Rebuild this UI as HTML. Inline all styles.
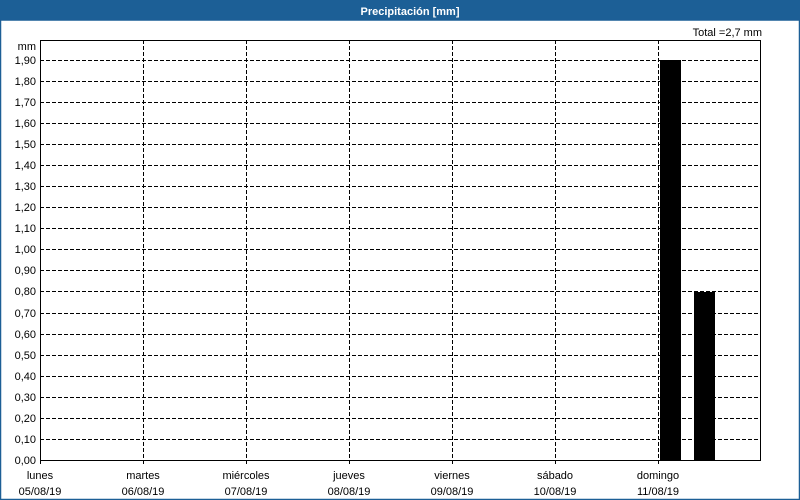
<!DOCTYPE html>
<html><head><meta charset="utf-8"><style>
html,body{margin:0;padding:0;width:800px;height:500px;overflow:hidden;background:#fff}
svg{display:block}
text{font-family:"Liberation Sans","DejaVu Sans",sans-serif;font-size:11px;fill:#000}
</style></head><body>
<svg width="800" height="500" xmlns="http://www.w3.org/2000/svg">
<rect x="0" y="0" width="800" height="500" fill="#fff"/>
<rect x="0" y="0" width="800" height="20" fill="#1c5f96"/>
<text x="410" y="15" text-anchor="middle" style="fill:#fff;font-weight:bold;font-size:11px">Precipitación [mm]</text>
<rect x="0.5" y="20" width="799" height="479.5" fill="none" stroke="#1c5f96" stroke-width="1.5"/>
<text x="762" y="36" text-anchor="end">Total =2,7 mm</text>
<text x="36" y="50" text-anchor="end">mm</text>
<g stroke="#000" stroke-width="1" stroke-dasharray="4,2" fill="none">
<line x1="40" y1="60.5" x2="760" y2="60.5"/><line x1="40" y1="81.5" x2="760" y2="81.5"/><line x1="40" y1="102.5" x2="760" y2="102.5"/><line x1="40" y1="123.5" x2="760" y2="123.5"/><line x1="40" y1="144.5" x2="760" y2="144.5"/><line x1="40" y1="165.5" x2="760" y2="165.5"/><line x1="40" y1="186.5" x2="760" y2="186.5"/><line x1="40" y1="207.5" x2="760" y2="207.5"/><line x1="40" y1="228.5" x2="760" y2="228.5"/><line x1="40" y1="249.5" x2="760" y2="249.5"/><line x1="40" y1="270.5" x2="760" y2="270.5"/><line x1="40" y1="291.5" x2="760" y2="291.5"/><line x1="40" y1="313.5" x2="760" y2="313.5"/><line x1="40" y1="334.5" x2="760" y2="334.5"/><line x1="40" y1="355.5" x2="760" y2="355.5"/><line x1="40" y1="376.5" x2="760" y2="376.5"/><line x1="40" y1="397.5" x2="760" y2="397.5"/><line x1="40" y1="418.5" x2="760" y2="418.5"/><line x1="40" y1="439.5" x2="760" y2="439.5"/>
<line x1="143.5" y1="40" x2="143.5" y2="464"/><line x1="246.5" y1="40" x2="246.5" y2="464"/><line x1="349.5" y1="40" x2="349.5" y2="464"/><line x1="452.5" y1="40" x2="452.5" y2="464"/><line x1="555.5" y1="40" x2="555.5" y2="464"/><line x1="658.5" y1="40" x2="658.5" y2="464"/>
</g>
<rect x="660" y="60" width="21" height="400" fill="#000"/>
<rect x="694" y="292" width="21" height="168" fill="#000"/>
<rect x="40.5" y="40.5" width="720" height="420" fill="none" stroke="#000" stroke-width="1"/>
<line x1="40.5" y1="460" x2="40.5" y2="464" stroke="#000"/>
<g text-anchor="end">
<text x="36" y="64">1,90</text><text x="36" y="85">1,80</text><text x="36" y="106">1,70</text><text x="36" y="127">1,60</text><text x="36" y="148">1,50</text><text x="36" y="169">1,40</text><text x="36" y="190">1,30</text><text x="36" y="211">1,20</text><text x="36" y="232">1,10</text><text x="36" y="253">1,00</text><text x="36" y="274">0,90</text><text x="36" y="295">0,80</text><text x="36" y="317">0,70</text><text x="36" y="338">0,60</text><text x="36" y="359">0,50</text><text x="36" y="380">0,40</text><text x="36" y="401">0,30</text><text x="36" y="422">0,20</text><text x="36" y="443">0,10</text><text x="36" y="464">0,00</text>
</g>
<g text-anchor="middle">
<text x="40" y="479">lunes</text><text x="40" y="495">05/08/19</text>
<text x="143" y="479">martes</text><text x="143" y="495">06/08/19</text>
<text x="246" y="479">miércoles</text><text x="246" y="495">07/08/19</text>
<text x="349" y="479">jueves</text><text x="349" y="495">08/08/19</text>
<text x="452" y="479">viernes</text><text x="452" y="495">09/08/19</text>
<text x="555" y="479">sábado</text><text x="555" y="495">10/08/19</text>
<text x="658" y="479">domingo</text><text x="658" y="495">11/08/19</text>
</g>
</svg>
</body></html>
